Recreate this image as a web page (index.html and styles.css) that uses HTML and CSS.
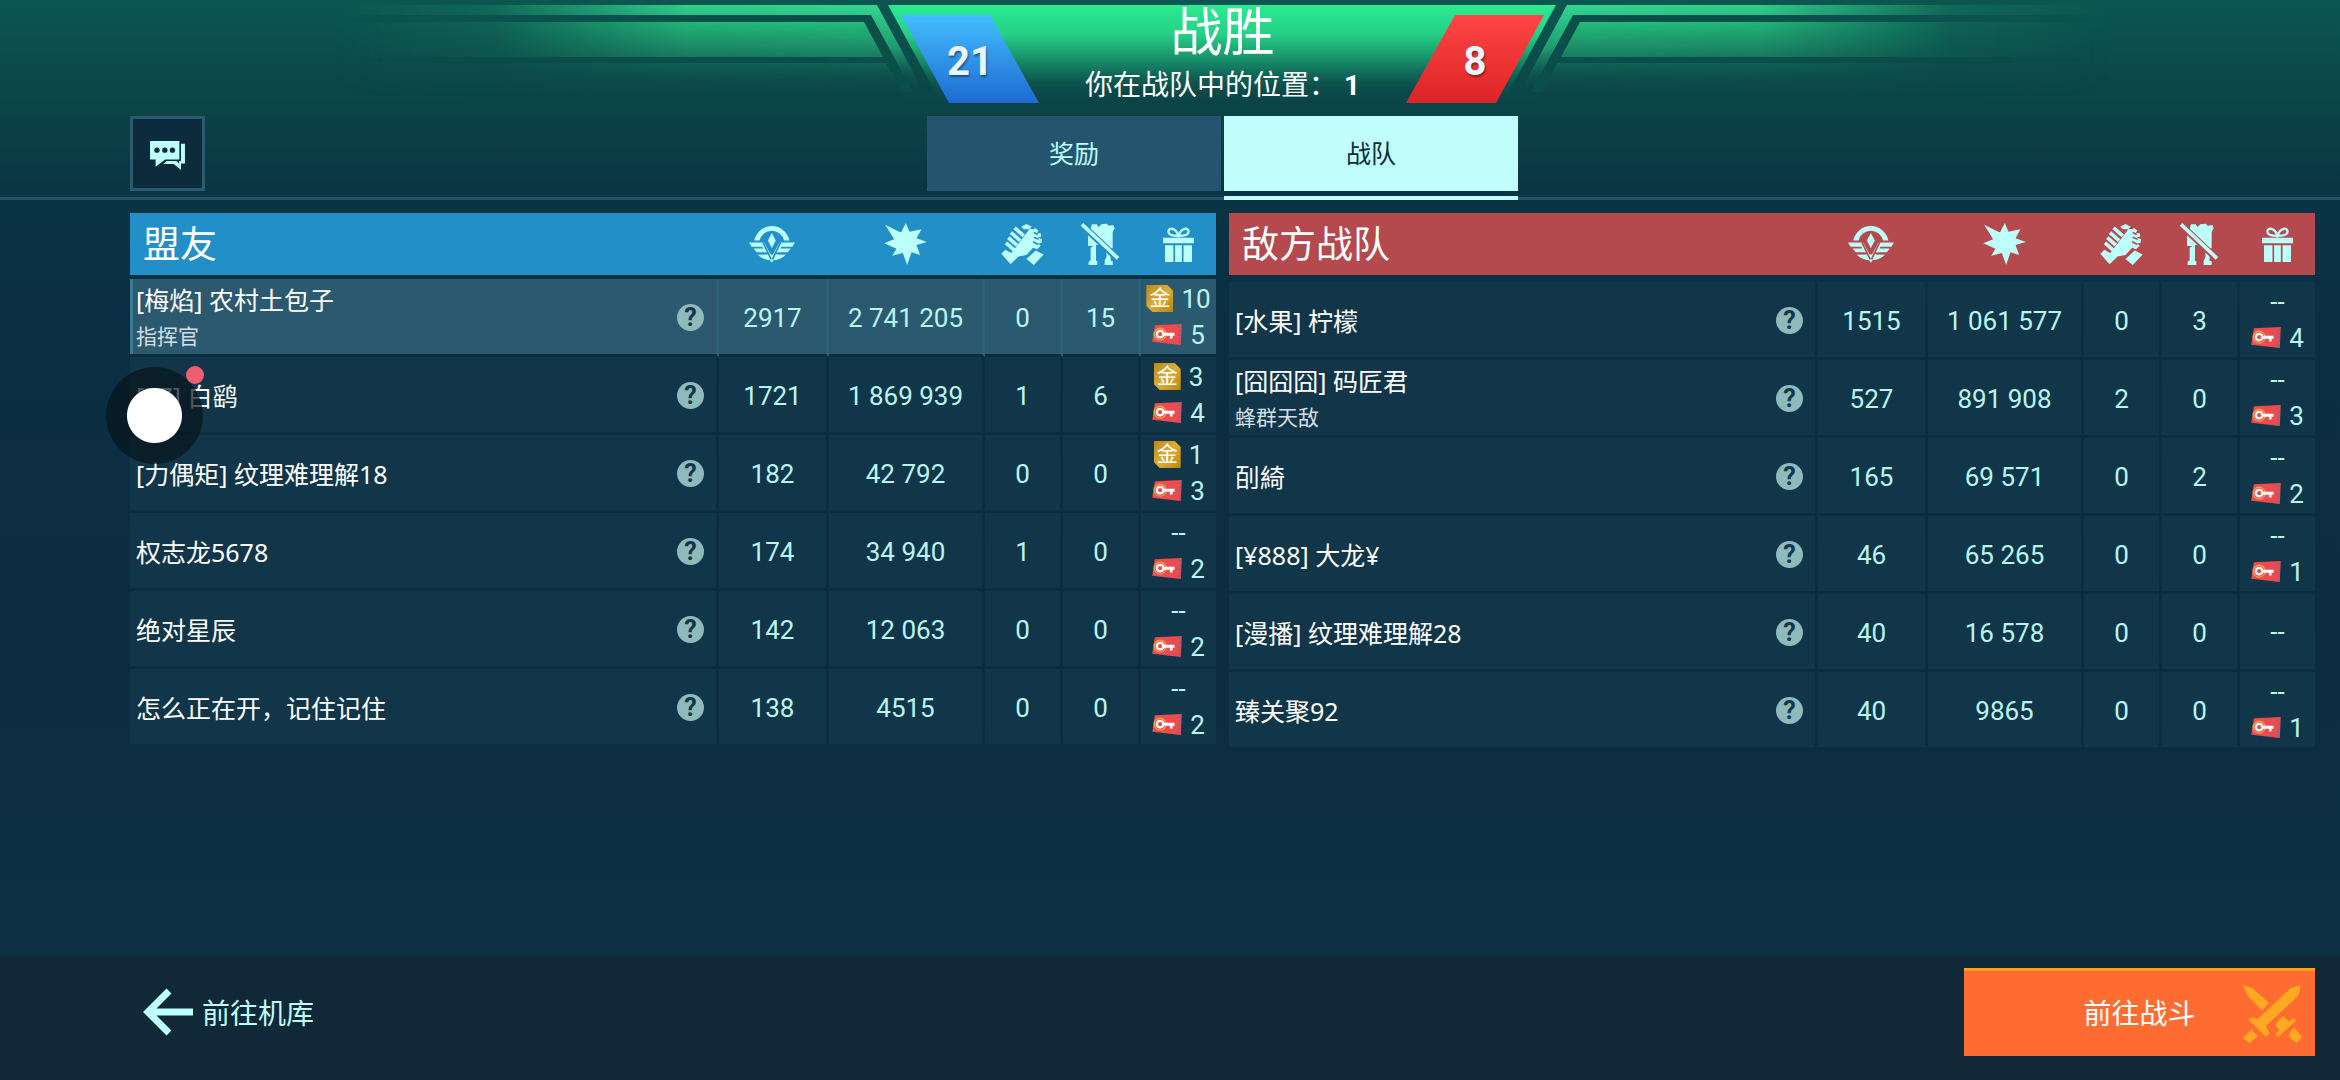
FILE: index.html
```
<!DOCTYPE html>
<html lang="zh-CN">
<head>
  <meta charset="UTF-8">
  <title>战胜</title>
  <link rel="stylesheet" href="styles.css">
</head>
<body>
  <!-- Shared icons -->
  <svg class="sprite" width="0" height="0" aria-hidden="true">
    <symbol id="i-honor" viewBox="0 0 139 110">
      <path d="M16 43A54 54 0 0 1 122 43H106A38 38 0 0 0 32 43Z"/>
      <path d="M69 20L81 43L69 66L57 43Z"/>
      <path d="M0 49H46L69 92L92 49H139L131 62H98L95 67H126L117 79H89L69 110L49 79H24L14 67H43L40 62H8Z"/>
      <path d="M26 85H112A52 40 0 0 1 26 85Z"/>
      <path class="cut" d="M42 48L67 100M96 48L71 100M20 82H56M82 82H118"/>
    </symbol>
    <symbol id="i-damage" viewBox="0 0 128 126">
      <path d="M3 5L45 26L51 28L65 0L76 26L112 19L97 46L128 57L97 66L108 96L82 88L69 126L56 90L24 98L37 77L0 61L30 49Z"/>
    </symbol>
    <symbol id="i-assist" viewBox="0 0 128 124">
      <path d="M60 8L76 0L92 8L84 16L68 16Z"/>
      <path class="finger" d="M40 12L68 36M29 26L57 50M21 41L47 64M14 57L38 78"/>
      <path d="M62 46L86 14L98 16L102 12L112 20L107 28L119 28L121 38L110 41L123 46L122 57L112 59L119 66L108 76L96 72L76 94L52 98L28 122L0 90L12 78L30 88Z"/>
      <path d="M76 106L104 80L128 92L98 124Z"/>
      <path class="cut" d="M98 26L110 32M98 40L113 46M96 54L112 62"/>
    </symbol>
    <symbol id="i-deaths" viewBox="0 0 120 126">
      <path d="M32 16L36 4H50L56 12L64 4L80 2L86 8L100 6L104 16L98 28V76H92V114H98V126H74V114L80 100L76 66H48V114H52V126H26V116L32 112V74L40 70L24 68V38L34 34Z"/>
      <path class="cut wide" d="M0 0L118 112"/>
      <path class="slash" d="M6 4L114 106"/>
    </symbol>
    <symbol id="i-reward" viewBox="0 0 92 104">
      <path class="bow" d="M46 26C38 2 16 0 16 14C16 24 34 26 46 26C58 26 76 24 76 14C76 0 54 2 46 26Z"/>
      <path d="M0 32H92V48H0ZM6 54H31V104H6ZM36 54H56V104H36ZM61 54H86V104H61Z"/>
    </symbol>
    <symbol id="i-key" viewBox="0 0 90 64">
      <path fill="#ec4b50" d="M8 4L90 0L87 64L0 54Z"/>
      <path fill="#a65e72" d="M76 6H88V12H76ZM80 18H88V24H80ZM76 30H88V36H76ZM80 42H87V48H80ZM76 52H86V58H76Z"/>
      <circle cx="24" cy="31" r="18" fill="none" stroke="#f5a042" stroke-width="4"/>
      <circle cx="24" cy="31" r="10" fill="none" stroke="#fff" stroke-width="7"/>
      <path fill="#fff" d="M32 27H68V36H62V44H54V36H32Z"/>
    </symbol>
  </svg>

  <header class="banner">
    <svg class="banner-art" viewBox="-920 0 1840 110" width="1840" height="110" aria-hidden="true">
      <defs>
        <linearGradient id="center" x1="0" y1="5" x2="0" y2="100" gradientUnits="userSpaceOnUse">
          <stop offset="0" stop-color="#2aeb91"/>
          <stop offset="0.3" stop-color="#26d187"/>
          <stop offset="0.65" stop-color="#147c61"/>
          <stop offset="1" stop-color="#0b4547" stop-opacity="0"/>
        </linearGradient>
        <linearGradient id="edge" x1="0" y1="5" x2="0" y2="92" gradientUnits="userSpaceOnUse">
          <stop offset="0" stop-color="#33da92"/>
          <stop offset="0.5" stop-color="#1f9c70"/>
          <stop offset="1" stop-color="#0b4547" stop-opacity="0"/>
        </linearGradient>
        <linearGradient id="band" x1="0" y1="22" x2="0" y2="57" gradientUnits="userSpaceOnUse">
          <stop offset="0" stop-color="#25c07d"/>
          <stop offset="1" stop-color="#1b7d62"/>
        </linearGradient>
        <linearGradient id="low" x1="0" y1="63" x2="0" y2="97" gradientUnits="userSpaceOnUse">
          <stop offset="0" stop-color="#126356"/>
          <stop offset="1" stop-color="#0b4547" stop-opacity="0"/>
        </linearGradient>
        <linearGradient id="fade">
          <stop offset="0.05" stop-color="#fff" stop-opacity="0"/>
          <stop offset="0.3" stop-color="#fff" stop-opacity="0.15"/>
          <stop offset="0.6" stop-color="#fff" stop-opacity="0.9"/>
          <stop offset="1" stop-color="#fff"/>
        </linearGradient>
        <mask id="side-mask" maskUnits="userSpaceOnUse" x="-920" y="0" width="640" height="110">
          <rect x="-920" y="0" width="640" height="110" fill="url(#fade)"/>
        </mask>
        <g id="side" mask="url(#side-mask)">
          <path fill="#0a4f49" d="M-920 15H-351L-309 92H-320L-339 63H-920Z"/>
          <path fill="url(#edge)" d="M-920 5H-345L-298 92H-309L-351 15H-920Z"/>
          <path fill="url(#band)" d="M-920 22H-358L-339 57H-920Z"/>
          <path fill="url(#low)" d="M-920 63H-336L-318 97H-920Z"/>
        </g>
      </defs>
      <use href="#side"/>
      <use href="#side" transform="scale(-1 1)"/>
      <path fill="url(#center)" d="M-334 5H334L284 97H-284Z"/>
    </svg>
    <div class="score blue">21</div>
    <div class="result">
      <h1>战胜</h1>
      <p>你在战队中的位置： <b>1</b></p>
    </div>
    <div class="score red">8</div>
  </header>

  <nav class="tabbar">
    <button class="chat" aria-label="聊天">
      <svg viewBox="0 0 106 88" width="35" height="29" aria-hidden="true">
        <path d="M0 0H89V56H46L17 78V56H0Z"/>
        <path d="M94 8H106V68H94V88L72 70H40L50 61H80L88 68V61H94Z"/>
        <circle class="dot" cx="21" cy="28" r="8"/>
        <circle class="dot" cx="45" cy="28" r="8"/>
        <circle class="dot" cx="68" cy="28" r="8"/>
      </svg>
    </button>
    <div class="tabs">
      <button class="tab">奖励</button>
      <button class="tab active">战队</button>
    </div>
  </nav>

  <main class="teams">
    <!-- Allies -->
    <table class="team allies">
      <colgroup><col><col class="c-honor"><col class="c-damage"><col class="c-small"><col class="c-small"><col class="c-reward"></colgroup>
      <thead>
        <tr>
          <th>盟友</th>
          <th><svg width="46" height="37"><use href="#i-honor"/></svg></th>
          <th><svg width="43" height="42"><use href="#i-damage"/></svg></th>
          <th><svg width="43" height="41"><use href="#i-assist"/></svg></th>
          <th><svg width="40" height="42"><use href="#i-deaths"/></svg></th>
          <th><svg width="31" height="35"><use href="#i-reward"/></svg></th>
        </tr>
      </thead>
      <tbody>
        <tr class="me">
          <td><div class="player"><div class="name">[梅焰] 农村土包子<small>指挥官</small></div><button class="help">?</button></div></td>
          <td>2917</td><td>2 741 205</td><td>0</td><td>15</td>
          <td><div class="loot"><i class="gold">金</i>10</div><div class="loot"><svg width="30" height="21"><use href="#i-key"/></svg>5</div></td>
        </tr>
        <tr>
          <td><div class="player"><div class="name">[ZZ] 白鹞</div><button class="help">?</button></div></td>
          <td>1721</td><td>1 869 939</td><td>1</td><td>6</td>
          <td><div class="loot"><i class="gold">金</i>3</div><div class="loot"><svg width="30" height="21"><use href="#i-key"/></svg>4</div></td>
        </tr>
        <tr>
          <td><div class="player"><div class="name">[力偶矩] 纹理难理解18</div><button class="help">?</button></div></td>
          <td>182</td><td>42 792</td><td>0</td><td>0</td>
          <td><div class="loot"><i class="gold">金</i>1</div><div class="loot"><svg width="30" height="21"><use href="#i-key"/></svg>3</div></td>
        </tr>
        <tr>
          <td><div class="player"><div class="name">权志龙5678</div><button class="help">?</button></div></td>
          <td>174</td><td>34 940</td><td>1</td><td>0</td>
          <td><div class="loot">--</div><div class="loot"><svg width="30" height="21"><use href="#i-key"/></svg>2</div></td>
        </tr>
        <tr>
          <td><div class="player"><div class="name">绝对星辰</div><button class="help">?</button></div></td>
          <td>142</td><td>12 063</td><td>0</td><td>0</td>
          <td><div class="loot">--</div><div class="loot"><svg width="30" height="21"><use href="#i-key"/></svg>2</div></td>
        </tr>
        <tr>
          <td><div class="player"><div class="name">怎么正在开，记住记住</div><button class="help">?</button></div></td>
          <td>138</td><td>4515</td><td>0</td><td>0</td>
          <td><div class="loot">--</div><div class="loot"><svg width="30" height="21"><use href="#i-key"/></svg>2</div></td>
        </tr>
      </tbody>
    </table>

    <!-- Enemies -->
    <table class="team enemies">
      <colgroup><col><col class="c-honor"><col class="c-damage"><col class="c-small"><col class="c-small"><col class="c-reward"></colgroup>
      <thead>
        <tr>
          <th>敌方战队</th>
          <th><svg width="46" height="37"><use href="#i-honor"/></svg></th>
          <th><svg width="43" height="42"><use href="#i-damage"/></svg></th>
          <th><svg width="43" height="41"><use href="#i-assist"/></svg></th>
          <th><svg width="40" height="42"><use href="#i-deaths"/></svg></th>
          <th><svg width="31" height="35"><use href="#i-reward"/></svg></th>
        </tr>
      </thead>
      <tbody>
        <tr>
          <td><div class="player"><div class="name">[水果] 柠檬</div><button class="help">?</button></div></td>
          <td>1515</td><td>1 061 577</td><td>0</td><td>3</td>
          <td><div class="loot">--</div><div class="loot"><svg width="30" height="21"><use href="#i-key"/></svg>4</div></td>
        </tr>
        <tr>
          <td><div class="player"><div class="name">[囧囧囧] 码匠君<small>蜂群天敌</small></div><button class="help">?</button></div></td>
          <td>527</td><td>891 908</td><td>2</td><td>0</td>
          <td><div class="loot">--</div><div class="loot"><svg width="30" height="21"><use href="#i-key"/></svg>3</div></td>
        </tr>
        <tr>
          <td><div class="player"><div class="name">&#x34E6;綺</div><button class="help">?</button></div></td>
          <td>165</td><td>69 571</td><td>0</td><td>2</td>
          <td><div class="loot">--</div><div class="loot"><svg width="30" height="21"><use href="#i-key"/></svg>2</div></td>
        </tr>
        <tr>
          <td><div class="player"><div class="name">[¥888] 大龙¥</div><button class="help">?</button></div></td>
          <td>46</td><td>65 265</td><td>0</td><td>0</td>
          <td><div class="loot">--</div><div class="loot"><svg width="30" height="21"><use href="#i-key"/></svg>1</div></td>
        </tr>
        <tr>
          <td><div class="player"><div class="name">[漫播] 纹理难理解28</div><button class="help">?</button></div></td>
          <td>40</td><td>16 578</td><td>0</td><td>0</td>
          <td><div class="loot">--</div></td>
        </tr>
        <tr>
          <td><div class="player"><div class="name">臻关聚92</div><button class="help">?</button></div></td>
          <td>40</td><td>9865</td><td>0</td><td>0</td>
          <td><div class="loot">--</div><div class="loot"><svg width="30" height="21"><use href="#i-key"/></svg>1</div></td>
        </tr>
      </tbody>
    </table>
  </main>

  <footer class="actions">
    <button class="back">
      <svg viewBox="0 0 50 48" width="50" height="48" aria-hidden="true">
        <path d="M26 3L5 24L26 45M5 24H50"/>
      </svg>
      前往机库
    </button>
    <button class="battle">
      前往战斗
      <svg class="swords" viewBox="0 0 180 180" width="60" height="60" aria-hidden="true">
        <path d="M4 4L30 12L82 56L60 80L14 32ZM112 106L124 96L140 112L154 102L162 110L108 160L100 150L112 138L100 124ZM146 142L156 130L180 158L164 178L140 156Z"/>
        <path d="M176 4L170 34L72 126L82 148L72 158L20 108L28 100L46 106L146 12ZM28 138L48 156L22 178L2 162Z"/>
      </svg>
    </button>
  </footer>

  <!-- Floating assistant bubble -->
  <button class="bubble" aria-label="悬浮球"></button>
</body>
</html>
```
FILE: styles.css
```
* {
  box-sizing: border-box;
}
body {
  margin: 0;
  min-height: 100vh;
  display: flex;
  flex-direction: column;
  position: relative;
  font-family: Roboto, "Noto Sans CJK SC", sans-serif;
  color: #fff;
  background: linear-gradient(#0b5750 0, #0b4547 100px, #0a3544 190px, #0b2e43 320px, #0c2c41 600px, #0d3042 954px);
}
button {
  font: inherit;
  color: inherit;
  border: 0;
  padding: 0;
  cursor: pointer;
}
.sprite {
  position: absolute;
}

/* Banner */
.banner {
  position: relative;
  display: flex;
  justify-content: center;
  align-items: flex-end;
  padding: 0 25px 0 130px;
}
.banner-art {
  position: absolute;
  top: 0;
  left: calc(50% + 52px);
  transform: translateX(-50%);
}
.score {
  position: relative;
  width: 138px;
  height: 88px;
  margin-bottom: 5px;
  font-size: 40px;
  font-weight: bold;
  line-height: 94px;
  text-align: center;
  text-shadow: 1px 2px 2px rgba(0, 0, 0, 0.4);
  color: #e8f6ff;
}
.score.blue {
  background: linear-gradient(#45bdff, #1d6bd2);
  clip-path: polygon(0 0, 89px 0, 100% 100%, 48px 100%);
}
.score.red {
  background: linear-gradient(#ff4545, #dc2527);
  clip-path: polygon(49px 0, 100% 0, 90px 100%, 0 100%);
}
.result {
  position: relative;
  width: 367px;
  padding-top: 4px;
  text-align: center;
}
.result h1 {
  margin: 0;
  font-size: 52px;
  font-weight: 400;
  line-height: 60px;
}
.result p {
  margin: 0;
  font-size: 28px;
  line-height: 44px;
  white-space: nowrap;
}

/* Tabs */
.tabbar {
  display: grid;
  grid-template-columns: 1fr auto 1fr;
  padding: 8px 25px 6px 130px;
  border-bottom: 3px solid #24506a;
}
.chat {
  width: 75px;
  height: 75px;
  padding-top: 4px;
  display: flex;
  align-items: center;
  justify-content: center;
  background: #0c2c3e;
  border: 3px solid #2a5a70;
  fill: #bdfffb;
}
.chat .dot {
  fill: #0c2c3e;
}
.tabs {
  display: flex;
  gap: 3px;
}
.tab {
  position: relative;
  width: 294px;
  height: 75px;
  padding-bottom: 4px;
  font-size: 25px;
  background: #24546e;
  color: #bdfffb;
}
.tab.active {
  background: #c2fffc;
  color: #0c2c3e;
}
.tab.active::after {
  content: "";
  position: absolute;
  left: 0;
  right: 0;
  bottom: -9px;
  height: 4px;
  background: #c2fffc;
}

/* Team tables */
.teams {
  display: grid;
  grid-template-columns: 1fr 1fr;
  align-items: start;
  gap: 13px;
  padding: 13px 25px 13px 130px;
}
.team {
  width: 100%;
  table-layout: fixed;
  border-collapse: separate;
  border-spacing: 0;
}
.allies {
  --head: #238fc9;
}
.enemies {
  --head: #b54a4e;
}
.c-honor {
  width: 110px;
}
.c-damage {
  width: 156px;
}
.c-small {
  width: 78px;
}
.c-reward {
  width: 75px;
}
.team th {
  height: 66px;
  padding: 0 4px 0 0;
  border-bottom: 4px solid transparent;
  background: var(--head);
  background-clip: padding-box;
  vertical-align: middle;
}
.enemies th {
  height: 69px;
  border-bottom-width: 7px;
}
.team th:first-child {
  padding: 3px 0 0 13px;
  text-align: left;
  font-size: 37px;
  font-weight: 400;
  line-height: 50px;
}
.team th:last-child {
  padding: 0;
}
.team th svg {
  display: block;
  margin: 0 auto;
  fill: #bdfffb;
}
.cut {
  fill: none;
  stroke: var(--head);
  stroke-width: 5;
}
.cut.wide {
  stroke-width: 20;
}
.slash, .finger, .bow {
  fill: none;
  stroke: #bdfffb;
  stroke-width: 11;
}
.bow {
  stroke-width: 7;
}
.team td {
  height: 78px;
  padding: 2px 0 0;
  border-right: 3px solid transparent;
  border-bottom: 3px solid transparent;
  background: #11364a;
  background-clip: padding-box;
  font-size: 26px;
  line-height: 36px;
  text-align: center;
  vertical-align: middle;
  white-space: nowrap;
  color: #b9f6f3;
}
.team td:last-child {
  padding: 0;
  border-right: 0;
}
.team .me td {
  background: #2b5a70;
  background-clip: padding-box;
  border-right-color: #2c6178;
}
.me td:first-child {
  box-shadow: inset 3px 0 #3a7b94;
}
.player {
  display: flex;
  align-items: center;
  justify-content: space-between;
  padding: 0 12px 0 6px;
}
.name {
  text-align: left;
  font-family: "Noto Sans", "Noto Sans CJK SC", sans-serif;
  font-size: 25px;
  color: #fff;
}
.name small {
  display: block;
  font-size: 21px;
  color: #d5dfe4;
}
.help {
  width: 27px;
  height: 27px;
  border-radius: 50%;
  background: #8fbabb;
  color: #12384b;
  font-size: 25px;
  font-weight: bold;
  line-height: 27px;
}
.loot {
  display: flex;
  align-items: center;
  justify-content: center;
  gap: 8px;
}
.gold {
  width: 27px;
  height: 27px;
  font-size: 21px;
  font-style: normal;
  line-height: 27px;
  color: #fff;
  background: linear-gradient(135deg, #b88a1c, #dcae35 50%, #b98412);
  clip-path: polygon(0 0, 78% 0, 100% 22%, 100% 100%, 22% 100%, 0 78%);
}

/* Bottom bar */
.actions {
  display: flex;
  justify-content: space-between;
  align-items: center;
  margin-top: auto;
  padding: 13px 25px 24px 143px;
  background: #102837;
  font-size: 28px;
}
.back {
  display: flex;
  align-items: center;
  gap: 9px;
  background: none;
  color: #bdfffb;
}
.back svg {
  fill: none;
  stroke: #bdfffb;
  stroke-width: 7;
}
.battle {
  position: relative;
  width: 351px;
  height: 88px;
  padding-bottom: 4px;
  background: #ff6c31;
  border-top: 3px solid #ffa01e;
}
.swords {
  position: absolute;
  right: 13px;
  top: 13px;
  fill: #ffa922;
}

.bubble {
  position: absolute;
  left: 106px;
  top: 367px;
  width: 97px;
  height: 97px;
  border-radius: 50%;
  background: radial-gradient(circle, #fff 27px, rgba(5, 20, 26, 0.7) 28px);
}
.bubble::after {
  content: "";
  position: absolute;
  right: -1px;
  top: -1px;
  width: 18px;
  height: 18px;
  border-radius: 50%;
  background: #ee5f6f;
}
```
